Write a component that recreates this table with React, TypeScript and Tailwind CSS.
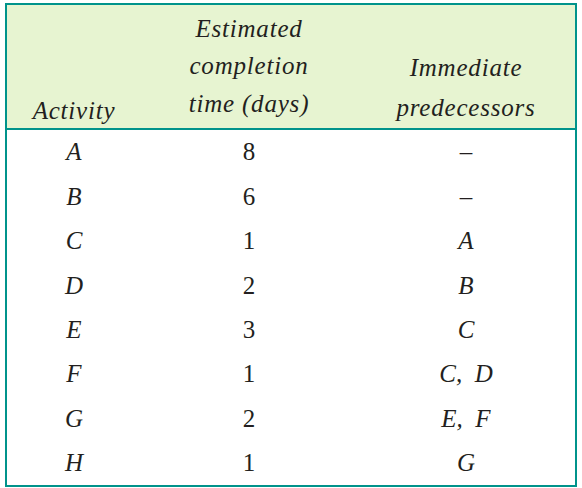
const rows = [
  ['A', '8', '–'],
  ['B', '6', '–'],
  ['C', '1', 'A'],
  ['D', '2', 'B'],
  ['E', '3', 'C'],
  ['F', '1', 'C,  D'],
  ['G', '2', 'E,  F'],
  ['H', '1', 'G'],
]

export default function App() {
  return (
    <div className="w-[582px] h-[488px] bg-white pt-[3px] pl-[5px] font-[Liberation_Serif,serif] text-[#231f20]">
      <div className="w-[572px] h-[484px] border-2 border-[#00938b] flex flex-col">
        <div className="h-[125px] shrink-0 bg-[#e7f4d1] border-b-2 border-[#00938b] grid grid-cols-[134px_216px_218px] items-end italic text-[25px] tracking-[0.8px]">
          <div className="text-center leading-[30px] pb-[2px]">Activity</div>
          <div className="text-center leading-[37.5px] pb-[6px]">
            Estimated
            <br />
            completion
            <br />
            time (days)
          </div>
          <div className="text-center leading-[40px]">
            Immediate
            <br />
            predecessors
          </div>
        </div>
        <div className="flex flex-col">
          {rows.map(([a, t, p]) => (
            <div key={a} className="h-[44.4px] shrink-0 grid grid-cols-[134px_216px_218px] items-center text-[25px]">
              <div className="text-center italic">{a}</div>
              <div className="text-center">{t}</div>
              <div className="text-center italic whitespace-pre">{p}</div>
            </div>
          ))}
        </div>
      </div>
    </div>
  )
}
